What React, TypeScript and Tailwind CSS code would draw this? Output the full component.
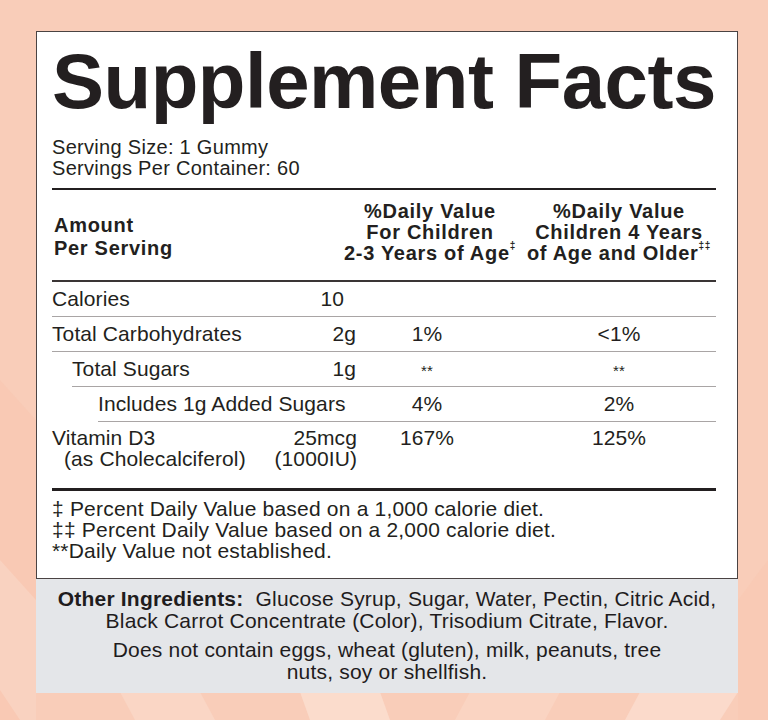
const rows = [
  { label: "Calories", indent: "pl-0", line: "ml-0", amount: "10", amountPad: "pr-[16px]", kids: "", adults: "" },
  { label: "Total Carbohydrates", indent: "pl-0", line: "ml-0", amount: "2g", amountPad: "pr-[4px]", kids: "1%", adults: "<1%" },
  { label: "Total Sugars", indent: "pl-[20px]", line: "ml-[20px]", amount: "1g", amountPad: "pr-[4px]", kids: "**", adults: "**" },
  { label: "Includes 1g Added Sugars", indent: "pl-[46px]", line: "ml-[46px]", amount: "", amountPad: "pr-[4px]", kids: "4%", adults: "2%" },
];

function Backdrop() {
  return (
    <svg className="absolute inset-0" width="768" height="720" viewBox="0 0 768 720">
      <rect width="768" height="720" fill="#f9cdb9" />
      <polygon points="0,380 36,420 36,720 0,720" fill="#f8c6b0" opacity="0.6" />
      <polygon points="0,560 36,600 36,720 20,720 0,690" fill="#fad5c4" opacity="0.7" />
      <polygon points="120,692 200,692 215,720 135,720" fill="#fad6c5" />
      <polygon points="300,692 380,692 390,720 310,720" fill="#fbdccc" />
      <polygon points="470,692 560,692 545,720 455,720" fill="#fad4c2" />
      <polygon points="640,692 738,692 720,720 625,720" fill="#fbdacb" />
      <polygon points="738,600 768,560 768,720 738,720" fill="#f8c8b3" opacity="0.6" />
    </svg>
  );
}

export default function App() {
  return (
    <div className="relative w-[768px] h-[720px] overflow-hidden text-[#231f20] font-[family-name:Liberation_Sans,Arial,sans-serif]">
      <Backdrop />
      <div className="relative ml-[36px] mt-[31px] w-[702px]">
        {/* white facts panel */}
        <div className="bg-white border border-[#4a4343] pl-[15px] pr-[21px] pt-[10px] pb-[17px]">
          <h1 className="text-[78px] leading-[78px] font-bold tracking-[-0.5px] whitespace-nowrap">Supplement Facts</h1>

          <div className="mt-[17px] text-[20px] leading-[21px] tracking-[0.3px]">
            <p>Serving Size: 1 Gummy</p>
            <p>Servings Per Container: 60</p>
          </div>

          <div className="mt-[9px] h-[2px] bg-[#231f20]" />

          {/* header */}
          <div className="flex pt-[11px] pb-[16px] border-b-[2px] border-[#3a3535] font-bold text-[20px] tracking-[0.7px]">
            <div className="w-[308px] pt-[13px] leading-[23px] pl-[2px]">
              <p>Amount</p>
              <p>Per Serving</p>
            </div>
            <div className="w-[140px] flex flex-col items-center leading-[21px] whitespace-nowrap">
              <p>%Daily Value</p>
              <p>For Children</p>
              <p>
                2-3 Years of Age<sup className="text-[10px] align-[6px]">‡</sup>
              </p>
            </div>
            <div className="w-[22px]" />
            <div className="w-[194px] flex flex-col items-center leading-[21px] whitespace-nowrap">
              <p>%Daily Value</p>
              <p>Children 4 Years</p>
              <p>
                of Age and Older<sup className="text-[10px] align-[6px]">‡‡</sup>
              </p>
            </div>
          </div>

          {/* nutrient rows */}
          <div className="text-[21px] tracking-[0.1px]">
            {rows.map((r) => (
              <div key={r.label}>
                <div className="flex h-[34px] items-center whitespace-nowrap">
                  <div className={`w-[308px] flex justify-between ${r.indent}`}>
                    <span>{r.label}</span>
                    <span className={r.amountPad}>{r.amount}</span>
                  </div>
                  <div className="w-[140px] text-center pr-[6px]">
                    {r.kids === "**" ? <span className="text-[15px]">**</span> : r.kids}
                  </div>
                  <div className="w-[22px]" />
                  <div className="w-[194px] text-center">
                    {r.adults === "**" ? <span className="text-[15px]">**</span> : r.adults}
                  </div>
                </div>
                <div className={`h-px bg-[#a9a5a5] ${r.line}`} />
              </div>
            ))}
            <div className="flex pt-[5px] h-[66px] leading-[21px] whitespace-nowrap">
              <div className="w-[308px] flex justify-between">
                <div>
                  <p>Vitamin D3</p>
                  <p className="pl-[12px]">(as Cholecalciferol)</p>
                </div>
                <div className="text-right pr-[3px]">
                  <p>25mcg</p>
                  <p>(1000IU)</p>
                </div>
              </div>
              <div className="w-[140px] text-center pr-[6px]">167%</div>
              <div className="w-[22px]" />
              <div className="w-[194px] text-center">125%</div>
            </div>
          </div>

          <div className="h-[3px] bg-[#231f20]" />

          <div className="pt-[7px] text-[21px] leading-[21px] tracking-[0.2px]">
            <p>‡ Percent Daily Value based on a 1,000 calorie diet.</p>
            <p>‡‡ Percent Daily Value based on a 2,000 calorie diet.</p>
            <p>**Daily Value not established.</p>
          </div>
        </div>

        {/* ingredients panel */}
        <div className="bg-[#e4e6e9] pt-[9px] pb-[10px] text-center text-[21px] leading-[22px] tracking-[0.2px] text-[#1f1c1d]">
          <p>
            <span className="font-bold">Other Ingredients:</span>&nbsp; Glucose Syrup, Sugar, Water, Pectin, Citric Acid,
            <br />
            Black Carrot Concentrate (Color), Trisodium Citrate, Flavor.
          </p>
          <p className="mt-[7px]">
            Does not contain eggs, wheat (gluten), milk, peanuts, tree
            <br />
            nuts, soy or shellfish.
          </p>
        </div>
      </div>
    </div>
  );
}
